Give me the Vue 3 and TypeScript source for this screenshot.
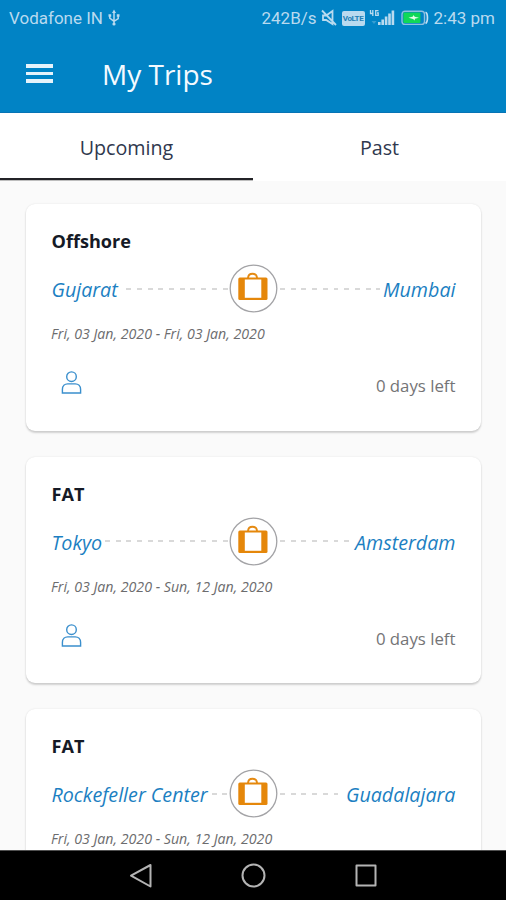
<script setup lang="ts">
interface Trip {
  title: string
  from: string
  to: string
  dates: string
  left?: string
}

const trips: Trip[] = [
  { title: 'Offshore', from: 'Gujarat', to: 'Mumbai', dates: 'Fri, 03 Jan, 2020 - Fri, 03 Jan, 2020', left: '0 days left' },
  { title: 'FAT', from: 'Tokyo', to: 'Amsterdam', dates: 'Fri, 03 Jan, 2020 - Sun, 12 Jan, 2020', left: '0 days left' },
  { title: 'FAT', from: 'Rockefeller Center', to: 'Guadalajara', dates: 'Fri, 03 Jan, 2020 - Sun, 12 Jan, 2020' },
]
</script>

<template>
  <div class="screen">
    <header class="top">
      <div class="status">
        <span class="carrier">Vodafone IN</span>
        <svg class="usb" width="12" height="18" viewBox="0 0 12 18" fill="none" stroke="currentColor" stroke-width="1.5">
          <path d="M6 3v12M1.800 7v2.200L6 12.300l4.200-2.600V7" />
          <path d="M6 0.500 8 4H4zM.5 5.300h2.700v2.400H.5zM8.800 5.300h2.700v2.400H8.800z" fill="currentColor" stroke="none" />
          <circle cx="6" cy="15" r="1.600" fill="currentColor" stroke="none" />
        </svg>
        <span class="speed">242B/s</span>
        <svg class="mute" width="16" height="18" viewBox="0 0 16 18" fill="none" stroke="currentColor" stroke-width="1.800">
          <path d="M2 6.500h3.200L11.500 2v13L5.200 11H2zM1 1.500l14 14.500" />
        </svg>
        <span class="volte">VoLTE</span>
        <svg class="signal" width="27" height="18" viewBox="0 0 27 18" fill="currentColor">
          <path d="M9 13h2.600v3H9zM12.400 10.500H15V16h-2.600zM15.800 7.500h2.600V16h-2.600zM19.200 4.500h2.600V16h-2.600zM22.600 1.500h2.600V16h-2.600z" />
          <path d="M1.500 1v3.500h3M3.800 1v6M9.500 1.600H6.700v4.700h2.500V4H8" fill="none" stroke="currentColor" stroke-width="1.300" />
          <path d="M2.500 12h5L5 15z" opacity=".3" />
        </svg>
        <svg class="battery" width="28" height="16" viewBox="0 0 28 16">
          <rect x="1" y="1.200" width="22.500" height="13.200" rx="3" fill="none" stroke="#8fbfe0" stroke-width="1.400" />
          <rect x="2.400" y="2.600" width="17" height="10.400" rx="1" fill="#10d858" />
          <path d="M7.500 7.800 12 6.600V5l1.800 1.700 4.200 1.100-4.200 1V10.600L12 9z" fill="#e4ffe9" />
          <path d="M24.500 2.200c2.600 1 2.600 10.200 0 11.200" fill="none" stroke="#c5e0f2" stroke-width="1.700" />
        </svg>
        <span class="clock">2:43 pm</span>
      </div>
      <div class="bar">
        <div class="menu"><i /><i /><i /></div>
        <h1>My Trips</h1>
      </div>
    </header>

    <nav class="tabs">
      <div class="tab active">Upcoming</div>
      <div class="tab">Past</div>
    </nav>

    <main class="list">
      <article v-for="(trip, i) in trips" :key="i" class="card">
        <h2>{{ trip.title }}</h2>
        <div class="route">
          <div class="side">
            <span class="place">{{ trip.from }}</span>
            <span class="dash" />
          </div>
          <svg class="case" width="49" height="49" viewBox="0 0 49 49" fill="none">
            <circle cx="24.500" cy="24.500" r="23.300" stroke="#a3a3a6" stroke-width="1.300" fill="#fff" />
            <path d="M19 14c.2-3.200 2-4.300 4.500-4.300S27.800 10.800 28 14" stroke="#e58a12" stroke-width="1.900" />
            <rect x="9.300" y="13.500" width="29.200" height="22.500" rx="1.500" fill="#e5870a" />
            <path d="M15.800 15.500h16.500v18.300H15.800z" fill="#fff" />
          </svg>
          <div class="side">
            <span class="dash" />
            <span class="place">{{ trip.to }}</span>
          </div>
        </div>
        <p class="dates">{{ trip.dates }}</p>
        <div v-if="trip.left" class="foot">
          <svg class="person" width="22" height="26" viewBox="0 0 22 26" fill="none" stroke="#3a8fcd" stroke-width="1.400">
            <circle cx="10.500" cy="6.700" r="4.800" />
            <path d="M1.400 23v-3.500c0-3.600 2.400-5.600 5.300-5.600h7.600c2.900 0 5.300 2 5.300 5.600V23z" />
          </svg>
          <span class="left">{{ trip.left }}</span>
        </div>
      </article>
    </main>

    <footer class="keys">
      <svg width="26" height="26" viewBox="0 0 26 26" fill="none" stroke="#b4b4b4" stroke-width="2" stroke-linejoin="round"><path d="M22.500 2v21.500L3 12.700z" /></svg>
      <svg width="26" height="26" viewBox="0 0 26 26" fill="none" stroke="#b4b4b4" stroke-width="2"><circle cx="13.500" cy="12.500" r="11" /></svg>
      <svg width="26" height="26" viewBox="0 0 26 26" fill="none" stroke="#b4b4b4" stroke-width="2" stroke-linejoin="round"><path d="M3.500 2.500h19v20h-19z" /></svg>
    </footer>
  </div>
</template>

<style>
body {
  margin: 0;
  overflow: hidden;
}
</style>

<style scoped>
.screen {
  width: 506px;
  height: 900px;
  display: flex;
  flex-direction: column;
  background: #fafafa;
  font-family: 'Open Sans', sans-serif;
  overflow: hidden;
}
.top {
  height: 113px;
  flex: none;
  box-sizing: border-box;
  background: #0183c5;
  border-bottom: 1px solid #0674b5;
}
.status {
  height: 36px;
  display: flex;
  align-items: center;
  padding: 0 11px 0 9px;
  color: #b9daef;
  font: 17px/36px Roboto, sans-serif;
  white-space: nowrap;
}
.usb {
  margin-left: 5px;
}
.speed {
  margin-left: auto;
}
.mute {
  margin-left: 4px;
}
.volte {
  width: 23px;
  height: 15px;
  margin-left: 5px;
  border-radius: 2px;
  background: #b9daef;
  color: #217fb5;
  font: bold 8px/15px Roboto, sans-serif;
  letter-spacing: -0.4px;
  text-align: center;
}
.signal {
  margin-left: 4px;
}
.battery {
  margin-left: 5px;
}
.clock {
  margin-left: 5px;
}
.bar {
  height: 76px;
  display: flex;
  align-items: center;
}
.menu {
  width: 27px;
  margin-left: 26px;
  display: flex;
  flex-direction: column;
  gap: 4px;
  padding-bottom: 1px;
}
.menu i {
  height: 3.700px;
  background: #e6f3fb;
}
h1 {
  margin: 0 0 0 49px;
  color: #f4faff;
  font-size: 28px;
  font-weight: 400;
  line-height: 36px;
}
.tabs {
  height: 68px;
  flex: none;
  display: flex;
  background: #fff;
}
.tab {
  flex: 1;
  box-sizing: border-box;
  height: 67px;
  border-bottom: 2px solid transparent;
  text-align: center;
  font-size: 19.700px;
  line-height: 69px;
  color: #30384e;
}
.tab.active {
  border-bottom-color: #232327;
  box-shadow: 0 1px 0 #bdbdbd;
}
.list {
  flex: 1;
  min-height: 0;
  overflow: hidden;
  display: flex;
  flex-direction: column;
  gap: 26px;
  padding: 23px 25px 0 26px;
}
.card {
  flex: none;
  box-sizing: border-box;
  height: 226.500px;
  padding: 24px 25.500px 0 25.500px;
  border-radius: 9px;
  background: #fff;
  box-shadow: 0 2px 2px rgba(0, 0, 0, 0.16), 0 0 2px rgba(0, 0, 0, 0.1);
}
h2 {
  margin: 0;
  color: #151a26;
  font-size: 18.100px;
  font-weight: 700;
  line-height: 26px;
}
.route {
  display: flex;
  align-items: center;
  height: 49px;
  margin-top: 10px;
}
.side {
  flex: 1;
  min-width: 0;
  display: flex;
  align-items: center;
}
.place {
  color: #1c7fc2;
  font-size: 19.700px;
  font-style: italic;
  line-height: 28px;
  padding-top: 3px;
  white-space: nowrap;
}
.dash {
  flex: 1;
  height: 2px;
  margin: 0 0 0 3px;
  background: repeating-linear-gradient(to left, transparent 0 1.500px, #d9d9d9 1.500px 6.500px, transparent 6.500px 10.700px);
}
.case + .side .dash {
  margin: 0 3px 0 0;
  background: repeating-linear-gradient(to right, transparent 0 2px, #d9d9d9 2px 7px, transparent 7px 10.700px);
}
.dates {
  margin: 11px 0 0 -0.500px;
  color: #6c6c6e;
  font-size: 14.200px;
  font-style: italic;
  line-height: 20px;
  white-space: nowrap;
}
.foot {
  display: flex;
  align-items: flex-start;
  justify-content: space-between;
  margin-top: 26px;
}
.person {
  margin-left: 9px;
}
.left {
  color: #747476;
  font-size: 16.800px;
  line-height: 24px;
  padding-top: 4px;
}
.keys {
  height: 50px;
  flex: none;
  box-sizing: border-box;
  border-top: 1px solid #505050;
  background: #000;
  display: flex;
  justify-content: center;
  align-items: center;
  gap: 86.500px;
}
</style>
